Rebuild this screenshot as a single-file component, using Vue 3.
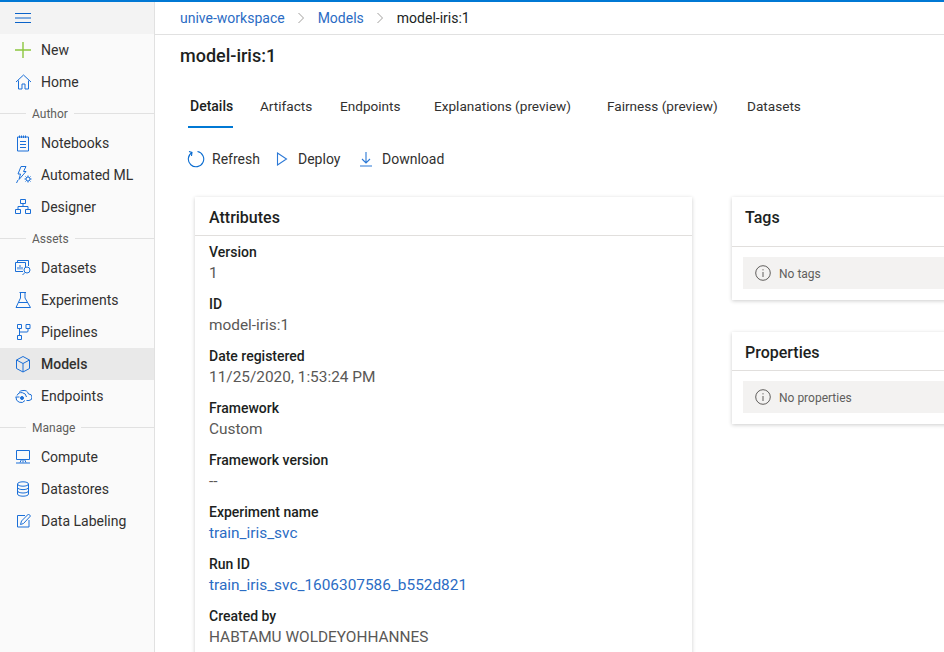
<script setup>
const icons = {
  new: '<path d="M8 1v16M0 9h16" stroke="#8cc63f" stroke-width="1.4"/>',
  home: '<path d="M1 9 8.5 2 16 9M3.500 7.500V16H7v-5h3v5h3.500V7.500"/>',
  notebooks: '<path d="M2.500 3h11v14h-11zM4.500 1.500V4M6.500 1.500V4M8.500 1.500V4M10.500 1.500V4M5 7.500h6M5 10.500h6M5 13.500h6"/>',
  automl: '<path d="M6 .5h5L8.500 5.500H11l-7 8 1.500-5.500H3zM3 14l-1.500 3"/><circle cx="13" cy="13" r="2"/><path d="M13 9.500v1.500M13 15v1.500M9.500 13H11M15 13h1.500M10.500 10.500l1 1M14.500 14.500l1 1M10.500 15.500l1-1M14.500 11.500l1-1"/>',
  designer: '<path d="M5.500 1.500h5v4h-5zM.5 11.500h5v4h-5zM10.500 11.500h5v4h-5zM8 5.500v3M3 11.500v-3h10v3"/>',
  datasets: '<path d="M2.500 3.500v-2h11V7M.5 3.500h10V9M8 12.500H.5v-9M3 10.500V8M5 10.500V6M7 10.500V8"/><circle cx="12" cy="11" r="3"/><path d="m10 13.500-2.500 2.500"/>',
  experiments: '<path d="M4.500 1.500H11M5.500 1.500V7L1 16.500h14.500L10 7V1.500M3.500 11.500h9.500"/>',
  pipelines: '<path d="M2.500 1.500h4v4h-4zM11 1.500h4v4h-4zM2.500 12.500h4v4h-4zM4.500 5.500v7M13 5.500V8c0 .8-.5 1-1 1H4.500"/>',
  models: '<path d="M8 1.500 14.500 5v8.500L8 17l-6.500-3.500V5zM1.500 5 8 8.500 14.500 5M8 8.500V17"/>',
  endpoints: '<path d="M8 3.500a5 5 0 0 1 5.500 3.500 3.200 3.200 0 0 1 .5 6.500h-2.500M4 5.500a4.500 4.500 0 0 1 4-2"/><path d="M11.500 10A5 5 0 0 0 2 8.500M1 10a5 5 0 0 0 9 3.500M.5 10h4"/><circle cx="7" cy="11" r="1.500" fill="#1a6fd8"/>',
  compute: '<path d="M1.500 2.500h13v9h-13zM8 11.500v3M1 15h14M5 14.500l1.500-3M11 14.500l-1.500-3"/>',
  datastores: '<ellipse cx="8" cy="4" rx="5.500" ry="2.200"/><path d="M2.500 4v10c0 1.300 2.500 2.200 5.500 2.200s5.500-.9 5.500-2.200V4M2.500 7.400c0 1.300 2.500 2.200 5.500 2.200s5.500-.9 5.500-2.200M2.500 10.800C2.500 12.100 5 13 8 13s5.500-.9 5.500-2.200"/>',
  labeling: '<path d="M14 8v7H2.500V3.500H10M5.500 12.500l1-3.500L13.500 2 15.500 4l-7 7.500z"/>'
}

const nav = [
  { type: 'item', label: 'New', icon: 'new' },
  { type: 'item', label: 'Home', icon: 'home' },
  { type: 'group', label: 'Author' },
  { type: 'item', label: 'Notebooks', icon: 'notebooks' },
  { type: 'item', label: 'Automated ML', icon: 'automl' },
  { type: 'item', label: 'Designer', icon: 'designer' },
  { type: 'group', label: 'Assets' },
  { type: 'item', label: 'Datasets', icon: 'datasets' },
  { type: 'item', label: 'Experiments', icon: 'experiments' },
  { type: 'item', label: 'Pipelines', icon: 'pipelines' },
  { type: 'item', label: 'Models', icon: 'models', active: true },
  { type: 'item', label: 'Endpoints', icon: 'endpoints' },
  { type: 'group', label: 'Manage' },
  { type: 'item', label: 'Compute', icon: 'compute' },
  { type: 'item', label: 'Datastores', icon: 'datastores' },
  { type: 'item', label: 'Data Labeling', icon: 'labeling' }
]

const tabs = ['Details', 'Artifacts', 'Endpoints', 'Explanations (preview)', 'Fairness (preview)', 'Datasets']

const attributes = [
  { label: 'Version', value: '1' },
  { label: 'ID', value: 'model-iris:1' },
  { label: 'Date registered', value: '11/25/2020, 1:53:24 PM' },
  { label: 'Framework', value: 'Custom' },
  { label: 'Framework version', value: '--' },
  { label: 'Experiment name', value: 'train_iris_svc', link: true },
  { label: 'Run ID', value: 'train_iris_svc_1606307586_b552d821', link: true },
  { label: 'Created by', value: 'HABTAMU WOLDEYOHHANNES' }
]

const sideCards = [
  { title: 'Tags', empty: 'No tags', tall: true },
  { title: 'Properties', empty: 'No properties' }
]
</script>

<template>
  <div class="page">
    <aside class="sidebar">
      <div class="burger">
        <svg width="16" height="10" viewBox="0 0 16 10"><path d="M0 .5h16M0 5h16M0 9.500h16" stroke="#0a63c9" fill="none"/></svg>
      </div>
      <template v-for="entry in nav" :key="entry.label">
        <div v-if="entry.type === 'group'" class="group"><span>{{ entry.label }}</span></div>
        <div v-else class="item" :class="{ active: entry.active }">
          <svg class="nav-icon" width="17" height="18" viewBox="0 0 17 18" v-html="icons[entry.icon]"></svg>
          <span>{{ entry.label }}</span>
        </div>
      </template>
    </aside>

    <main class="main">
      <nav class="crumbs">
        <a>unive-workspace</a>
        <svg class="chev" width="6" height="12" viewBox="0 0 6 12"><path d="m.5 1 5 5-5 5"/></svg>
        <a>Models</a>
        <svg class="chev" width="6" height="12" viewBox="0 0 6 12"><path d="m.5 1 5 5-5 5"/></svg>
        <span>model-iris:1</span>
      </nav>

      <h1 class="title">model-iris:1</h1>

      <div class="tabs">
        <div v-for="(tab, i) in tabs" :key="tab" class="tab" :class="{ selected: i === 0 }">
          <span>{{ tab }}</span>
        </div>
      </div>

      <div class="toolbar">
        <button class="tool refresh">
          <svg width="18" height="18" viewBox="0 0 18 18" fill="none" stroke="#0a6cd0" stroke-width="1.1"><path d="M5 2.500A7.700 7.700 0 1 0 10.500 1.500M2 1.500l3 1-.5 3.500"/></svg>
          Refresh
        </button>
        <button class="tool deploy">
          <svg width="12" height="14" viewBox="0 0 12 14" fill="none" stroke="#2b78d6" stroke-width="1.1"><path d="M1.500 1v12l9-6z"/></svg>
          Deploy
        </button>
        <button class="tool download">
          <svg width="12" height="16" viewBox="0 0 12 16" fill="none" stroke="#2b78d6" stroke-width="1.1"><path d="M6 1v11M2 8l4 4 4-4M0 15h12"/></svg>
          Download
        </button>
      </div>

      <div class="cards">
        <section class="card attributes">
          <h2 class="card-head">Attributes</h2>
          <div class="fields">
            <div v-for="attr in attributes" :key="attr.label" class="field">
              <div class="field-label">{{ attr.label }}</div>
              <div class="field-value" :class="{ link: attr.link }">{{ attr.value }}</div>
            </div>
          </div>
        </section>

        <div class="side">
          <section v-for="card in sideCards" :key="card.title" class="card side-card">
            <h2 class="card-head" :class="{ tall: card.tall }">{{ card.title }}</h2>
            <div class="empty">
              <svg width="16" height="16" viewBox="0 0 16 16" fill="none" stroke="#605e5c"><circle cx="8" cy="8" r="7.300"/><path d="M8 7v5M8 4.200v1.200"/></svg>
              <span>{{ card.empty }}</span>
            </div>
          </section>
        </div>
      </div>
    </main>
  </div>
</template>

<style>
html, body {
  margin: 0;
  height: 100%;
  overflow: hidden;
  background: #fff;
}
</style>

<style scoped>
.page {
  display: flex;
  height: 652px;
  width: 944px;
  overflow: hidden;
  border-top: 2px solid #0078d4;
  box-sizing: border-box;
  font-family: Roboto, "Open Sans", sans-serif;
  font-size: 14px;
  color: #323130;
}

.sidebar {
  width: 155px;
  flex: none;
  background: #fafafa;
  border-right: 1px solid #e1e1e1;
  box-sizing: border-box;
}

.burger {
  height: 32px;
  background: #f3f3f3;
  padding-left: 15px;
  display: flex;
  align-items: center;
}

.item {
  height: 32px;
  display: flex;
  align-items: center;
  padding-left: 15px;
  gap: 9px;
}

.item.active {
  background: #e9e9e9;
  font-weight: 500;
}

.nav-icon {
  flex: none;
  fill: none;
  stroke: #1a6fd8;
}

.group {
  height: 29px;
  display: flex;
  align-items: center;
  gap: 6px;
  font-size: 12px;
  color: #605e5c;
  padding-top: 2px;
  box-sizing: border-box;
}

.group::before {
  content: "";
  width: 26px;
  height: 1px;
  background: #e1e1e1;
}

.group::after {
  content: "";
  flex: 1;
  height: 1px;
  background: #e1e1e1;
}

.main {
  flex: 1;
  min-width: 0;
}

.crumbs {
  height: 32px;
  border-bottom: 1px solid #e1e1e1;
  padding-left: 25px;
  display: flex;
  align-items: center;
  gap: 13.5px;
  box-sizing: content-box;
}

.crumbs a {
  color: #2b6cc4;
}

.crumbs span {
  color: #201f1e;
}

.chev {
  fill: none;
  stroke: #a19f9d;
}

.title {
  margin: 0;
  padding: 9px 0 0 25px;
  font-size: 18px;
  font-weight: 500;
  line-height: 24px;
  color: #201f1e;
}

.tabs {
  display: grid;
  grid-template-columns: 70px 80px 94px 173px 140px auto;
  margin: 22px 0 0 33px;
  font-size: 13.6px;
}

.tab {
  height: 44px;
  box-sizing: border-box;
  padding: 2px 0 0 2px;
  line-height: 28px;
}

.tab.selected span {
  display: block;
  margin-left: -2px;
  padding-left: 2px;
  width: 43px;
  height: 34px;
  font-size: 14px;
  font-weight: 500;
  color: #201f1e;
  border-bottom: 2px solid #0078d4;
}

.toolbar {
  display: flex;
  margin: 9px 0 0 32px;
  height: 32px;
}

.tool {
  border: 0;
  background: none;
  padding: 0;
  font: inherit;
  color: inherit;
  display: flex;
  align-items: center;
}

.refresh { width: 89px; gap: 7px; }
.deploy { width: 84px; gap: 10px; }
.download { gap: 10px; }

.cards {
  display: flex;
  align-items: flex-start;
  margin: 22px 0 0 40px;
}

.card {
  background: #fff;
  box-shadow: 0 1px 4px rgba(0, 0, 0, .2);
}

.attributes {
  width: 497px;
  flex: none;
}

.card-head {
  margin: 0;
  height: 38px;
  line-height: 41px;
  padding-left: 14px;
  font-size: 16px;
  font-weight: 500;
  color: #201f1e;
  border-bottom: 1px solid #e1dfdd;
}

.card-head.tall {
  height: 49px;
}

.fields {
  padding: 5px 14px 0;
}

.field {
  height: 52px;
}

.field-label {
  line-height: 22px;
  font-weight: 500;
  color: #201f1e;
}

.field-value {
  line-height: 20px;
  font-size: 15.4px;
  color: #5a5856;
}

.field-value.link {
  color: #2b6cc4;
}

.side {
  margin-left: 40px;
  flex: 1;
  min-width: 0;
  display: flex;
  flex-direction: column;
  gap: 32px;
}

.side-card {
  margin-right: -10px;
  padding-bottom: 11px;
}

.side-card .card-head {
  margin-bottom: 10px;
  padding-left: 13px;
}

.empty {
  margin-left: 11px;
  height: 32px;
  background: #f3f2f1;
  display: flex;
  align-items: center;
  padding-left: 12px;
  gap: 8px;
  font-size: 12px;
  color: #605e5c;
}

.empty span {
  padding-top: 2px;
}
</style>
